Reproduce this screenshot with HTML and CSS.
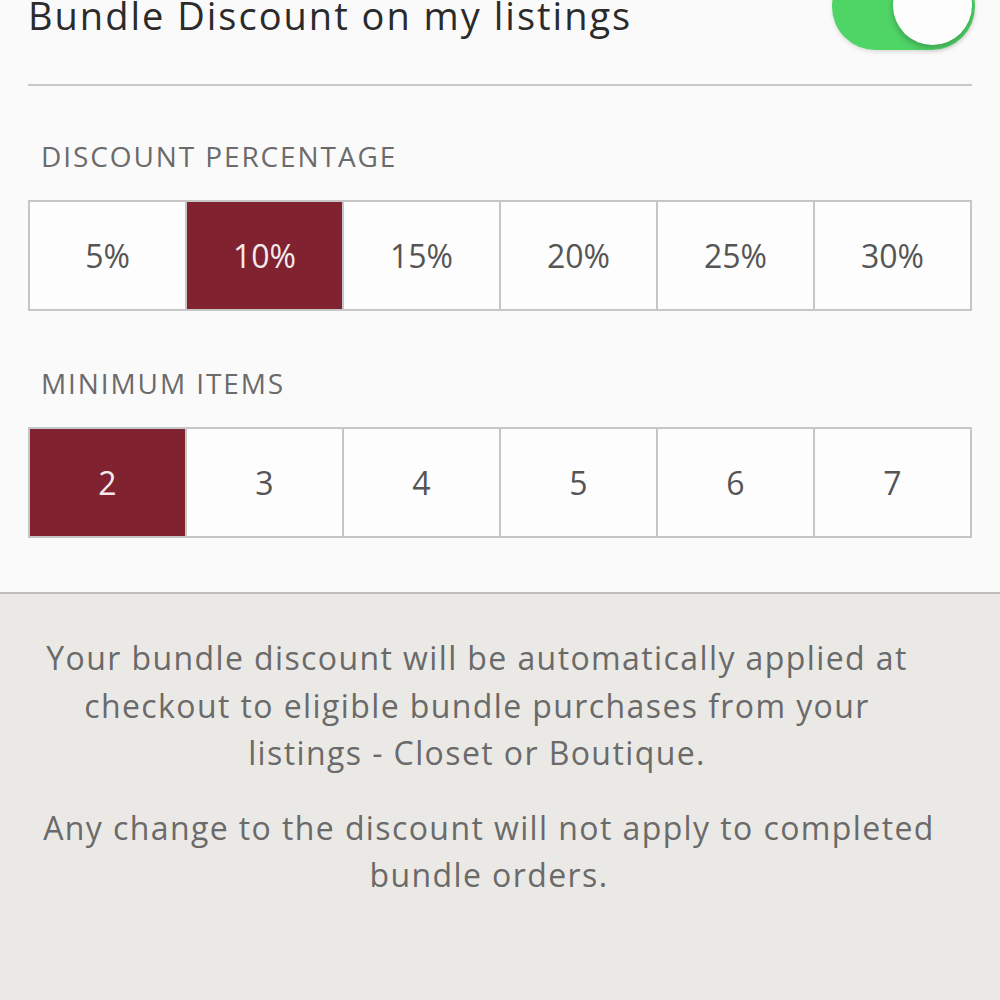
FILE: index.html
```html
<html>
    <head>
        <link rel="stylesheet" href="styles.css">
    </head>
    <body>
        <div class="settings">
            <div class="header-row">
                <span class="header-title">Bundle Discount on my listings</span>
                <div class="toggle on"><div class="knob"></div></div>
            </div>

            <div class="section-label">DISCOUNT PERCENTAGE</div>
            <div class="choices">
                <div class="choice">5%</div>
                <div class="choice selected">10%</div>
                <div class="choice">15%</div>
                <div class="choice">20%</div>
                <div class="choice">25%</div>
                <div class="choice">30%</div>
            </div>

            <div class="section-label">MINIMUM ITEMS</div>
            <div class="choices">
                <div class="choice selected">2</div>
                <div class="choice">3</div>
                <div class="choice">4</div>
                <div class="choice">5</div>
                <div class="choice">6</div>
                <div class="choice">7</div>
            </div>
        </div>

        <div class="info">
            <p class="info-main">Your bundle discount will be automatically applied at<br>checkout to eligible bundle purchases from your<br>listings - Closet or Boutique.</p>
            <p>Any change to the discount will not apply to completed<br>bundle orders.</p>
        </div>
    </body>
</html>
```

FILE: styles.css
```css
    body {
        margin: 0;
        background-color: #fbfafb;
        font-family: "Open Sans", Lato, sans-serif;
        overflow: hidden;
    }
    .settings {
        padding: 0 28px 54px 28px;
    }
    .header-row {
        display: flex;
        justify-content: space-between;
        align-items: flex-start;
        margin-top: -40px;
        padding-top: 3px;
        height: 121px; /* ends at the divider line */
        border-bottom: 2px solid #c9c9c9;
    }
    .header-title {
        font-size: 38px;
        color: #2b2b2b;
        line-height: 50px;
        margin-top: 27px;
        letter-spacing: 2px;
    }
    .toggle {
        width: 143px;
        height: 87px;
        margin-right: -3px;
        border-radius: 44px;
        background-color: #4fd466;
        position: relative;
        box-shadow: 0 2px 4px rgba(0, 0, 0, 0.12);
    }
    .knob {
        position: absolute; /* knob sits over the track */
        right: 3px;
        top: 3px;
        width: 79px;
        height: 79px;
        border-radius: 50%;
        background-color: #fdfdfd;
        box-shadow: 0 3px 6px rgba(0, 0, 0, 0.25);
    }
    .section-label {
        font-size: 28px;
        letter-spacing: 1.9px;
        color: #6b6b6b;
        padding-left: 13px;
        margin-top: 50px;
        margin-bottom: 24px;
        line-height: 40px;
    }
    .choices {
        display: grid;
        grid-template-columns: repeat(6, 1fr);
        gap: 2px;
        padding: 2px;
        background-color: #c6c6c6;
        box-sizing: border-box;
        height: 111px;
    }
    .choices + .section-label {
        margin-top: 52px;
    }
    .choice {
        background-color: #fdfdfd;
        display: flex;
        align-items: center;
        justify-content: center;
        font-size: 32px;
        color: #555;
    }
    .choice.selected {
        background-color: #802230;
        color: #f4eaec;
    }
    .info {
        border-top: 2px solid #bdbcba;
        background-color: #ebe9e5;
        text-align: center;
        padding: 40px 32px 200px 10px;
        color: #6a6a6a;
        font-size: 32px;
        letter-spacing: 1.4px;
        line-height: 47.5px;
    }
    .info p {
        margin: 0 0 27px 0;
    }
    .info .info-main {
        margin-right: 24px;
    }
```
